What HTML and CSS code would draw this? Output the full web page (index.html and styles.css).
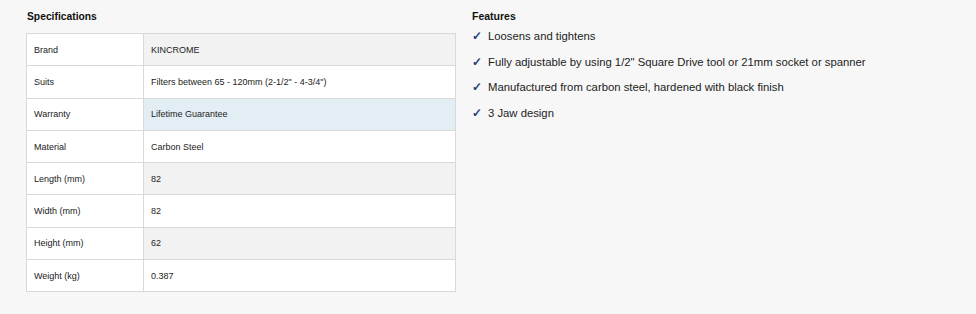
FILE: index.html
```html
<!DOCTYPE html>
<html>
<head>
<meta charset="utf-8">
<link rel="stylesheet" href="styles.css">
</head>
<body>
<div class="wrap">
  <section class="specs">
    <h2 class="title">Specifications</h2>
    <table class="spec-table">
      <tr class="alt"><td class="k">Brand</td><td class="v">KINCROME</td></tr>
      <tr><td class="k">Suits</td><td class="v">Filters between 65 - 120mm (2-1/2" - 4-3/4")</td></tr>
      <tr class="hl"><td class="k">Warranty</td><td class="v">Lifetime Guarantee</td></tr>
      <tr><td class="k">Material</td><td class="v">Carbon Steel</td></tr>
      <tr class="alt"><td class="k">Length (mm)</td><td class="v">82</td></tr>
      <tr><td class="k">Width (mm)</td><td class="v">82</td></tr>
      <tr class="alt"><td class="k">Height (mm)</td><td class="v">62</td></tr>
      <tr><td class="k">Weight (kg)</td><td class="v">0.387</td></tr>
    </table>
  </section>
  <section class="features">
    <h2 class="ftitle">Features</h2>
    <ul class="flist">
      <li><span class="tick">✓</span>Loosens and tightens</li>
      <li><span class="tick">✓</span>Fully adjustable by using 1/2" Square Drive tool or 21mm socket or spanner</li>
      <li><span class="tick">✓</span>Manufactured from carbon steel, hardened with black finish</li>
      <li><span class="tick">✓</span>3 Jaw design</li>
    </ul>
  </section>
</div>
</body>
</html>
```

FILE: styles.css
```css
html, body {
  margin: 0;
  padding: 0;
  background: #f7f7f7;
  font-family: "Liberation Sans", Arial, sans-serif;
  color: #222;
}
.wrap {
  display: flex;
  padding-left: 26px;
  gap: 16px;
}
.specs {
  width: 430px;
}
.title {
  margin: 0;
  padding: 10px 0 0 1px;
  height: 33px;
  font-size: 10.3px;
  font-weight: bold;
  line-height: 14px;
  color: #111;
  box-sizing: border-box;
}
.spec-table {
  width: 430px;
  border-collapse: collapse;
  background: #fff;
}
.spec-table td {
  border: 1px solid #d9d9d9;
  height: 32.3px;
  padding: 0 0 0 7px;
  font-size: 9px;
  color: #222;
  box-sizing: border-box;
}
.spec-table td.k {
  width: 117px;
  background: #fff;
}
.spec-table tr.alt td.v {
  background: #f2f2f2;
}
.spec-table tr.hl td.v {
  background: #e2eef4;
}
.features {
  flex: 1;
}
.ftitle {
  margin: 0;
  padding-top: 9px;
  font-size: 10.5px;
  font-weight: bold;
  line-height: 14px;
  color: #111;
}
.flist {
  list-style: none;
  margin: 1px 0 0;
  padding: 0;
}
.flist li {
  font-size: 11.3px;
  line-height: 25.5px;
  height: 25.5px;
  color: #222;
}
.tick {
  color: #1f3f7a;
  font-weight: bold;
  margin-right: 6px;
  font-size: 12px;
}
```
